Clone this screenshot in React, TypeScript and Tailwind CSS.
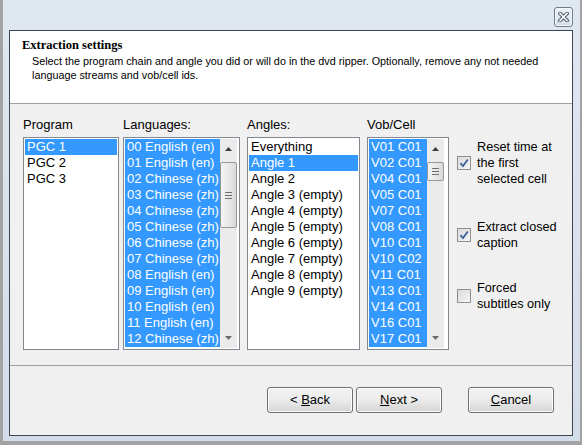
import React from 'react';

const LANGS = [
  '00 English (en)',
  '01 English (en)',
  '02 Chinese (zh)',
  '03 Chinese (zh)',
  '04 Chinese (zh)',
  '05 Chinese (zh)',
  '06 Chinese (zh)',
  '07 Chinese (zh)',
  '08 English (en)',
  '09 English (en)',
  '10 English (en)',
  '11 English (en)',
  '12 Chinese (zh)',
];

const ANGLES = [
  'Everything',
  'Angle 1',
  'Angle 2',
  'Angle 3 (empty)',
  'Angle 4 (empty)',
  'Angle 5 (empty)',
  'Angle 6 (empty)',
  'Angle 7 (empty)',
  'Angle 8 (empty)',
  'Angle 9 (empty)',
];

const CELLS = [
  'V01 C01', 'V02 C01', 'V04 C01', 'V05 C01', 'V07 C01', 'V08 C01', 'V10 C01',
  'V10 C02', 'V11 C01', 'V13 C01', 'V14 C01', 'V16 C01', 'V17 C01',
];

function Arrow({ down }: { down?: boolean }) {
  return (
    <svg width="7" height="4" viewBox="0 0 7 4">
      {down ? <path d="M0 0h7L3.5 4z" fill="#6b6b6b" /> : <path d="M0 4h7L3.5 0z" fill="#3c3c3c" />}
    </svg>
  );
}

// Win7 style vertical scrollbar; thumb position is fixed per list
function ScrollBar({ thumb }: { thumb: string }) {
  return (
    <div className="flex w-[17px] shrink-0 flex-col bg-[#ebebeb]">
      <div className="flex h-[18px] items-center justify-center pt-[2px]">
        <Arrow />
      </div>
      <div className="flex-1">
        <div
          className={`${thumb} flex flex-col items-center justify-center gap-[2px] rounded-[2px] border border-[#979797] bg-gradient-to-r from-[#f4f4f4] via-[#e9e9e9] to-[#d8d8d8]`}
        >
          <span className="h-px w-[7px] bg-[#6e6e6e]" />
          <span className="h-px w-[7px] bg-[#6e6e6e]" />
          <span className="h-px w-[7px] bg-[#6e6e6e]" />
        </div>
      </div>
      <div className="flex h-[18px] items-center justify-center pb-[2px]">
        <Arrow down />
      </div>
    </div>
  );
}

function ListBox({
  label,
  width,
  items,
  isSelected,
  thumb,
  gapRight = '',
}: {
  label: string;
  width: string;
  items: string[];
  isSelected: (i: number) => boolean;
  thumb?: string;
  gapRight?: string;
}) {
  return (
    <div className={`${width} shrink-0`}>
      <div className="mb-[5px] h-[15px] text-[13px] leading-[15px] text-black">{label}</div>
      <div className={`flex h-[213px] overflow-hidden border border-[#828790] bg-white p-px ${gapRight}`}>
        <div className="min-w-0 flex-1 overflow-hidden">
          {items.map((item, i) => (
            <div
              key={item}
              className={`h-4 whitespace-nowrap pl-[2px] text-[13px] leading-4 ${
                isSelected(i) ? 'bg-[#3399ff] text-white' : 'text-black'
              }`}
            >
              {item}
            </div>
          ))}
        </div>
        {thumb ? <ScrollBar thumb={thumb} /> : null}
      </div>
    </div>
  );
}

function CheckBox({ checked }: { checked: boolean }) {
  return (
    <span className="flex h-[14px] w-[14px] shrink-0 items-center justify-center border border-[#8e8f8f] bg-gradient-to-br from-[#d9d9d9] to-[#f7f7f7]">
      {checked ? (
        <svg width="10" height="10" viewBox="0 0 10 10">
          <path d="M1.5 5.2 4 8 8.8 1.5" fill="none" stroke="#3f5f95" strokeWidth="1.8" />
        </svg>
      ) : null}
    </span>
  );
}

function Option({ lines, checked, className }: { lines: string[]; checked: boolean; className?: string }) {
  return (
    <div className={`flex items-center gap-[6px] ${className ?? ''}`}>
      <CheckBox checked={checked} />
      <div className="text-[12.7px] leading-4 text-black">
        {lines.map((l) => (
          <div key={l}>{l}</div>
        ))}
      </div>
    </div>
  );
}

function Button({ children, className }: { children: React.ReactNode; className?: string }) {
  return (
    <div
      className={`flex h-[26px] w-[86px] items-center justify-center whitespace-pre rounded-[3px] border border-[#707070] bg-gradient-to-b from-[#f2f2f2] via-[#ebebeb] to-[#d4d4d4] text-[13px] text-black shadow-[inset_0_0_0_1px_#fcfcfc] ${className ?? ''}`}
    >
      {children}
    </div>
  );
}

export default function App() {
  return (
    <div className="flex h-[445px] w-[582px] bg-[#a3a3a3] pb-[4px] pl-[3px] pr-[2px] font-['Liberation_Sans',Arial,sans-serif]">
      <div className="flex flex-1 flex-col bg-gradient-to-b from-[#dfe7f1] to-[#d3dde9] pb-[5px] pl-[6px] pr-[7px]">
        {/* title bar */}
        <div className="flex h-[30px] shrink-0 items-start justify-end pt-[7px]">
          <div className="flex h-[20px] w-[19px] items-center justify-center rounded-[3px] border border-[#6f7c8c] bg-gradient-to-b from-[#eef3f9] to-[#d2dce8] shadow-[inset_0_0_0_1px_#f6f9fc]">
            <svg width="11" height="10" viewBox="0 0 11 10">
              <path d="M2 1.5 9 8.5M9 1.5 2 8.5" stroke="#4a5566" strokeWidth="3.6" strokeLinecap="square" />
              <path d="M2 1.5 9 8.5M9 1.5 2 8.5" stroke="#ffffff" strokeWidth="1.6" strokeLinecap="square" />
            </svg>
          </div>
        </div>

        {/* client area */}
        <div className="flex flex-1 flex-col border border-[#3c4452] bg-[#f0f0f0]">
          <div className="h-[73px] shrink-0 border-b border-[#a0a0a0] bg-white pl-[12px] pt-[7px]">
            <div className="font-['Liberation_Serif',serif] text-[12.5px] font-bold leading-[15px] text-black">
              Extraction settings
            </div>
            <div className="mt-px pl-[10px] text-[10.8px] leading-[14px] text-black">
              Select the program chain and angle you did or will do in the dvd ripper. Optionally, remove any not needed
              <br />
              language streams and vob/cell ids.
            </div>
          </div>

          <div className="flex h-[261px] shrink-0 items-start pl-[13px] pt-[13px]">
            <ListBox label="Program" width="w-[96px] mr-[4px]" items={['PGC 1', 'PGC 2', 'PGC 3']} isSelected={(i) => i === 0} />
            <ListBox
              label="Languages:"
              width="w-[117px] mr-[7px]"
              items={LANGS}
              isSelected={() => true}
              thumb="mt-[5px] h-[66px]"
              gapRight="pr-[2px]"
            />
            <ListBox label="Angles:" width="w-[113px] mr-[7px]" items={ANGLES} isSelected={(i) => i === 1} />
            <ListBox
              label="Vob/Cell"
              width="w-[82px] mr-[8px]"
              items={CELLS}
              isSelected={() => true}
              thumb="mt-[5px] h-[19px]"
              gapRight="pr-[4px]"
            />
            <div className="pt-[22px]">
              <Option lines={['Reset time at', 'the first', 'selected cell']} checked />
              <Option lines={['Extract closed', 'caption']} checked className="mt-[32px]" />
              <Option lines={['Forced', 'subtitles only']} checked={false} className="mt-[29px]" />
            </div>
          </div>

          <div className="flex flex-1 items-start justify-end border-t border-[#a0a0a0] pr-[18px] pt-[21px]">
            <Button>
              {'< '}
              <u>B</u>
              {'ack'}
            </Button>
            <Button className="ml-[3px]">
              <u>N</u>
              {'ext >'}
            </Button>
            <Button className="ml-[26px]">
              <u>C</u>
              {'ancel'}
            </Button>
          </div>
        </div>
      </div>
    </div>
  );
}
